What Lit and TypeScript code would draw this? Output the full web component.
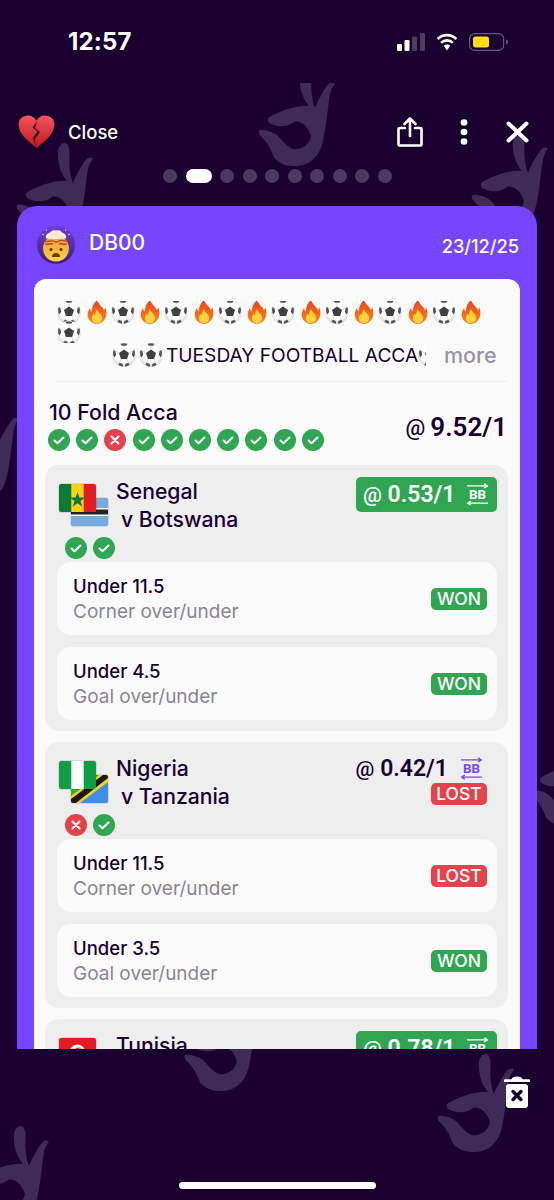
import { LitElement, html, css, svg } from "lit";
import { customElement } from "lit/decorators.js";

const HAND = "M145 0 C133 0 125 15 125 30 C124 60 132 90 152 113 C120 110 70 125 32 148 C26 153 30 165 40 168 C60 175 85 180 110 160 C130 158 150 175 158 203 C155 225 135 243 110 243 C95 243 80 225 60 203 C45 190 20 183 5 185 C-2 190 2 198 10 205 C25 220 35 235 48 268 C70 290 90 293 110 293 C150 293 185 270 195 213 C205 170 208 120 215 78 C220 55 232 50 228 45 C222 40 212 45 205 55 C195 70 180 95 170 118 C160 95 158 60 160 30 C160 12 155 0 145 0 Z";
const HANDS: [number, number][] = [
  [258, -15], [16, 60], [471, 50], [184, 910], [437, 971], [-28, 1043], [-58, 320], [530, 645],
];

const ball = svg`<svg class="ball" viewBox="0 0 24 24"><defs><radialGradient id="bg" cx=".5" cy=".42" r=".62"><stop offset=".6" stop-color="#fff"/><stop offset="1" stop-color="#cfcfcf"/></radialGradient></defs><circle cx="12" cy="12" r="11.900" fill="url(#bg)"/><path d="M12 6.500l5 3.600-1.900 5.900H8.900L7 10.100z" fill="#404040"/><path d="M8.500 .8Q12-.1 15.500 .8L14.300 2.800H9.700zM1.500 7.200L3.300 7.800 4.200 11.800 2.500 14.500Q.2 11.500 1.500 7.200zM22.500 7.200L20.700 7.800 19.800 11.800 21.500 14.500Q23.800 11.500 22.500 7.200zM6.300 21.800L7.800 19.800 10.800 21 11 23.800Q8.300 23.500 6.300 21.800zM17.700 21.800L16.200 19.800 13.200 21 13 23.800Q15.700 23.500 17.700 21.800z" fill="#565656"/><path d="M12 6.500V2.800M7 10.100L3.300 7.800M17 10.100L20.700 7.800M8.900 16L7.800 19.800M15.100 16L16.200 19.800" stroke="#bbb" stroke-width=".5"/></svg>`;
const fire = svg`<svg class="fire" viewBox="0 0 20 24"><defs><linearGradient id="fg" x1="0" y1="0" x2="0" y2="1"><stop offset="0" stop-color="#f0401a"/><stop offset="1" stop-color="#f98a1c"/></linearGradient></defs><path d="M10 0c1 4 5 6 7 10 1-1 1-2 1-3 2 4 2 8 0 12-2 3-5 5-8 5s-7-2-8.500-5.500C0 15 1 11 3 8c0 2 1 3 2 3.500C4.500 7 7 3 10 0z" fill="url(#fg)"/><path d="M10 9c.5 2.800 4 4.500 5 8 .7 3.400-2.300 6.500-5 6.500s-5.500-3-5-6c.2-1.700 1.100-3 2-4 .2 1 .6 1.500 1.200 1.800C7.900 13 9 11 10 9z" fill="#ffd23f"/></svg>`;

const heart = svg`<svg class="heart" viewBox="0 0 37 34"><defs><linearGradient id="hg" x1="0" y1="0" x2="0" y2="1"><stop offset="0" stop-color="#f2555a"/><stop offset="1" stop-color="#c4161c"/></linearGradient></defs><path d="M18.500 33C12 27 1 20 .5 10 .3 4 5 .5 10 .5c4 0 6.500 2 8.500 5 2-3 4.500-5 8.500-5 5 0 9.700 3.500 9.500 9.500-.5 10-11 17-18 23z" fill="url(#hg)"/><path d="M19.500 5.500l-5 7 5 4-4.500 6 3 10.500-1-9 5-7-5-4z" fill="#3a1a22"/></svg>`;

const brain = svg`<svg class="face" viewBox="0 0 38 38"><defs><linearGradient id="ag" x1="0" y1="0" x2="0" y2="1"><stop offset="0" stop-color="#6a3ed0"/><stop offset="1" stop-color="#40207a"/></linearGradient><linearGradient id="yg" x1="0" y1="0" x2="0" y2="1"><stop offset="0" stop-color="#f39a2a"/><stop offset="1" stop-color="#fcd34a"/></linearGradient></defs><circle cx="19" cy="19" r="19" fill="url(#ag)"/><circle cx="19" cy="22.500" r="13" fill="url(#yg)"/><path d="M9 12c-1-3 2-5 4-5.500 2-2.500 4-2.500 6-2 2-.5 4.500-.5 6 2 2 .5 5 2.500 4 5.500-2 1.500-3.500 .5-5 1-2-.5-3.500 .5-5 0-2 .5-3.500-.5-5 0-1.500-.5-3.500 .5-5-1z" fill="#f6ead2"/><path d="M7 15c4 2 6-1 9 0s3 2 6 0 5 1 9 0M8 18c3 1 5-1 8 0M22 18c3-1 5 1 8 0" stroke="#a94a2a" stroke-width="1.300" fill="none"/><circle cx="14" cy="23.500" r="1.500" fill="#4a2c12"/><circle cx="24" cy="23.500" r="1.500" fill="#4a2c12"/><path d="M15 31c0-3 1.800-4 4-4s4 1 4 4z" fill="#6e3413"/><path d="M5 8l2 1M9 3.500l.7 1.500M29 3.500l-.7 1.500M33 8l-2 1" stroke="#e8d6b5" stroke-width="1"/></svg>`;

const share = svg`<svg class="share" viewBox="0 0 26 30" fill="none" stroke="#fff" stroke-width="2.600" stroke-linecap="round" stroke-linejoin="round"><path d="M8 11H2.500a1 1 0 0 0-1 1v15.500a1 1 0 0 0 1 1h21a1 1 0 0 0 1-1V12a1 1 0 0 0-1-1H18"/><path d="M13 19V2M7.500 7L13 1.500 18.500 7"/></svg>`;
const more = svg`<svg class="more" viewBox="0 0 8 26" fill="#fff"><circle cx="4" cy="3.500" r="3.300"/><circle cx="4" cy="13" r="3.300"/><circle cx="4" cy="22.500" r="3.300"/></svg>`;
const closeIcon = svg`<svg class="close" viewBox="0 0 23 22" fill="none" stroke="#fff" stroke-width="4" stroke-linecap="round"><path d="M2.500 2.500l18 17M20.500 2.500l-18 17"/></svg>`;
const trash = svg`<svg class="trash" viewBox="0 0 26 32"><path d="M0 4.500C0 3.800.6 3.300 1.300 3.300H7.500C8 1.500 10 .5 13 .5s5 1 5.500 2.800h6.200c.7 0 1.300.5 1.300 1.200V6H0z" fill="#fff"/><rect x="2" y="8" width="22" height="24" rx="3" fill="#fff"/><path d="M9 15.500l8 8M17 15.500l-8 8" stroke="#190031" stroke-width="3.400" stroke-linecap="round"/></svg>`;
const signal = svg`<svg class="signal" viewBox="0 0 28 18"><rect x="0" y="11" width="5" height="7" rx="1.200" fill="#fff"/><rect x="7.500" y="7" width="5" height="11" rx="1.200" fill="#fff"/><rect x="15" y="3.500" width="5" height="14.500" rx="1.200" fill="#4b3c62"/><rect x="23" y="0" width="5" height="18" rx="1.200" fill="#4b3c62"/></svg>`;
const wifi = svg`<svg class="wifi" viewBox="0 0 24 18" fill="#fff"><path d="M12 3.500c3.300 0 6.300 1.300 8.500 3.400l1.700-1.900A15 15 0 0 0 12 .8 15 15 0 0 0 1.800 5l1.700 1.900A12.300 12.300 0 0 1 12 3.500z"/><path d="M12 8.800c1.900 0 3.700.7 5 2l1.800-1.900A10 10 0 0 0 12 6.100 10 10 0 0 0 5.200 8.900L7 10.800c1.300-1.300 3.100-2 5-2z"/><path d="M12 11.500c-1.300 0-2.400.5-3.200 1.300L12 17.500l3.200-4.700c-.8-.8-1.900-1.300-3.200-1.300z"/></svg>`;
const battery = svg`<svg class="battery" viewBox="0 0 39 18"><rect x=".6" y=".6" width="34" height="16.800" rx="5" fill="none" stroke="#66587c" stroke-width="1.200"/><rect x="4" y="3.500" width="16" height="11" rx="2.500" fill="#fedb18"/><path d="M37 6.500c1.200.4 2 1.300 2 2.500s-.8 2.100-2 2.500z" fill="#66587c"/></svg>`;

const flags: Record<string, unknown> = {
  sn: svg`<rect width="37" height="28" fill="#fcd116"/><rect width="12.300" height="28" fill="#0a7a3c"/><rect x="24.700" width="12.300" height="28" fill="#e31b23"/><path d="M18.500 8l1.900 5.600h5.900l-4.800 3.500 1.800 5.600-4.800-3.400-4.800 3.400 1.800-5.600-4.800-3.500h5.900z" fill="#0a7a3c"/>`,
  bw: svg`<rect width="37" height="28" fill="#75aadb"/><rect y="10" width="37" height="8" fill="#fff"/><rect y="11.500" width="37" height="5" fill="#222"/>`,
  ng: svg`<rect width="37" height="28" fill="#fff"/><rect width="12.300" height="28" fill="#0f9d46"/><rect x="24.700" width="12.300" height="28" fill="#0f9d46"/>`,
  tz: svg`<rect width="37" height="28" fill="#3d8fe8"/><path d="M0 0h37L0 28z" fill="#1eb53a"/><path d="M0 28L37 0v7L9 28z" fill="#fcd116"/><path d="M0 21L28 0h9L0 28z" fill="#fcd116"/><path d="M0 28V24L32 0h5v3L5 28z" fill="#1a1a1a"/>`,
  tn: svg`<rect width="37" height="28" fill="#e31b23"/><circle cx="18.500" cy="14" r="7.500" fill="#fff"/><circle cx="19.500" cy="14" r="4.500" fill="#e31b23"/><circle cx="21" cy="14" r="3.600" fill="#fff"/>`,
};
const flag = (code: string, cls: string) =>
  html`<svg class="flag ${cls}" viewBox="0 0 37 28" preserveAspectRatio="none">${flags[code]}</svg>`;

const bb = (color: string) => svg`<svg class="bb" viewBox="0 0 24 24" style="color:${color}"><path d="M1 3h21M19 .8l3.200 2.200-3.200 2.200M2 21h21M5 18.800l-3.200 2.200 3.200 2.200" fill="none" stroke="currentColor" stroke-width="1.500"/><text x="12" y="17" text-anchor="middle" font-family="Roboto, sans-serif" font-weight="700" font-size="14" fill="currentColor">BB</text></svg>`;

const tick = (ok: boolean) =>
  html`<span class="tick ${ok ? "ok" : "bad"}"
    ><svg viewBox="0 0 22 22" fill="none" stroke="#fff" stroke-width="2" stroke-linecap="round" stroke-linejoin="round">
      ${ok ? svg`<path d="M6.500 11.500l3 2.800 6-5.800"/>` : svg`<path d="M7.500 7.500l7 7M14.500 7.500l-7 7"/>`}
    </svg></span
  >`;

interface Bet { pick: string; market: string; won: boolean }
interface Leg { a: string; b?: string; fa: string; fb?: string; odds: string; won: boolean; ticks: boolean[]; bets: Bet[] }

const LEGS: Leg[] = [
  { a: "Senegal", b: "v Botswana", fa: "sn", fb: "bw", odds: "0.53/1", won: true, ticks: [true, true],
    bets: [{ pick: "Under 11.5", market: "Corner over/under", won: true }, { pick: "Under 4.5", market: "Goal over/under", won: true }] },
  { a: "Nigeria", b: "v Tanzania", fa: "ng", fb: "tz", odds: "0.42/1", won: false, ticks: [false, true],
    bets: [{ pick: "Under 11.5", market: "Corner over/under", won: false }, { pick: "Under 3.5", market: "Goal over/under", won: true }] },
  { a: "Tunisia", fa: "tn", odds: "0.78/1", won: true, ticks: [], bets: [] },
];

const badge = (won: boolean) => html`<span class="badge ${won ? "won" : "lost"}">${won ? "WON" : "LOST"}</span>`;

@customElement("app-root")
export class AppRoot extends LitElement {
  static styles = css`
    :host { display: block; width: 554px; height: 1200px; position: relative; overflow: hidden; background: #190031; font-family: Inter, "Liberation Sans", sans-serif; color: #190031; }
    .pattern { position: absolute; left: 0; right: 0; top: 83px; bottom: 0; overflow: hidden; }
    .hand { position: absolute; width: 77px; height: 98px; fill: #3e2b57; }
    .screen { position: relative; display: flex; flex-direction: column; }
    .status { height: 83px; display: flex; align-items: center; padding: 0 46px 0 68px; color: #fff; box-sizing: border-box; }
    .time { font-size: 24px; font-weight: 700; flex: 1; letter-spacing: .2px; }
    .signal { width: 28px; height: 18px; margin-right: 10px; }
    .wifi { width: 24px; height: 18px; margin-right: 10px; }
    .battery { width: 39px; height: 18px; }
    .top { height: 66px; margin-top: 16px; display: flex; align-items: center; padding: 0 25px 0 18px; color: #fff; }
    .heart { width: 37px; height: 34px; }
    .closeLabel { margin-left: 13px; font-size: 18.500px; font-weight: 500; flex: 1; }
    .share { width: 26px; height: 30px; margin-right: 37px; }
    .more { width: 8px; height: 26px; margin-right: 38px; }
    .close { width: 23px; height: 22px; }
    .dots { display: flex; gap: 8.500px; margin-top: 4px; padding-left: 163px; }
    .dot { width: 14px; height: 14px; border-radius: 50%; background: #4a3a60; }
    .dot.on { width: 26px; border-radius: 7px; background: #fff; }
    .card { margin: 23px 17px 0; height: 843px; overflow: hidden; background: #7545ff; border-radius: 20px 20px 0 0; padding: 0 17px; box-sizing: border-box; }
    .cardHead { height: 73px; display: flex; align-items: center; color: #fff; }
    .face { width: 38px; height: 38px; margin: 4px 14px 0 3px; }
    .user { font-size: 21px; font-weight: 500; flex: 1; }
    .date { font-size: 18.200px; font-weight: 500; margin-top: 6px; margin-right: 1px; }
    .panel { background: #fafafa; border-radius: 12px 12px 0 0; padding: 22px 12px 0 11px; }
    .msg { margin-left: 12px; display: flex; flex-wrap: wrap; width: 440px; height: 42px; overflow: hidden; }
    .slot { width: 26.750px; height: 21px; display: flex; align-items: center; }
    .ball { width: 24px; height: 24px; flex: none; }
    .fire { width: 20px; height: 24px; flex: none; margin-left: 3px; }
    .tickerRow { margin: 0 0 14px 12px; height: 24px; display: flex; align-items: center; }
    .ticker { margin-left: 55px; width: 314px; display: flex; align-items: center; overflow: hidden; flex: none; white-space: nowrap; font-size: 19.150px; gap: 3px; }
    .ticker .ball:last-child { margin-left: -3px; }
    .moreLink { margin-left: 18px; font-size: 21.500px; font-weight: 500; color: #9a93a8; }
    .rule { margin-left: 11px; height: 1px; background: #efefef; }
    .summary { display: flex; align-items: center; justify-content: space-between; padding: 18px 1px 14px 3px; }
    .title { font-size: 21.300px; font-weight: 500; line-height: 25px; margin-left: 1px; }
    .ticks { display: flex; gap: 6.200px; margin-top: 4px; }
    .tick { width: 22px; height: 22px; border-radius: 50%; display: block; }
    .tick svg { display: block; width: 22px; height: 22px; }
    .tick.ok { background: #30a653; }
    .tick.bad { background: #e5434b; }
    .odds { font-family: Roboto, sans-serif; font-weight: 600; display: flex; align-items: center; gap: 5px; font-size: 23px; white-space: nowrap; }
    .odds small { font-size: 21px; font-weight: 500; }
    .total { font-size: 26px; margin-top: 3px; }
    .total small { font-size: 22px; }
    .leg { background: #eee; border-radius: 14px; padding: 12px 11px 11px 12px; margin-bottom: 11px; display: flex; flex-direction: column; gap: 12px; }
    .legHead { height: 73px; display: flex; justify-content: space-between; }
    .teams { display: flex; }
    .flags { position: relative; width: 59px; height: 60px; flex: none; }
    .flag { position: absolute; width: 37px; height: 28px; border-radius: 2px; box-shadow: 0 0 0 .5px rgba(0,0,0,.2); }
    .flag.front { left: 2px; top: 7px; }
    .flag.back { left: 14px; top: 21px; }
    .names { font-size: 21.200px; font-weight: 500; line-height: 28px; }
    .names div + div { padding-left: 5px; }
    .legLeft { display: flex; flex-direction: column; }
    .legLeft .ticks { margin: 0 0 0 8px; }
    .legRight { display: flex; flex-direction: column; align-items: flex-end; }
    .pill { height: 35px; box-sizing: border-box; width: 141px; padding: 0 8px 0 7px; border-radius: 5px; background: #30a653; color: #fff; display: flex; align-items: center; justify-content: space-between; }
    .plain { height: 28px; display: flex; align-items: center; gap: 12px; padding-right: 14px; }
    .bb { width: 23px; height: 23px; flex: none; }
    .legRight .badge { margin: 1px 10px 0 0; }
    .bets { display: flex; flex-direction: column; gap: 12px; }
    .bet { height: 73px; box-sizing: border-box; background: #fafafa; border-radius: 14px; padding: 0 10px 0 16px; display: flex; align-items: center; justify-content: space-between; }
    .pick { font-size: 18.500px; font-weight: 500; line-height: 25px; }
    .market { font-size: 19px; color: #8a8595; line-height: 25px; }
    .badge { font-size: 17.500px; font-weight: 500; color: #fff; border-radius: 5px; height: 22px; line-height: 22px; padding: 0 3px; min-width: 50px; text-align: center; }
    .badge.won { background: #30a653; }
    .badge.lost { background: #e5434b; }
    .foot { display: flex; justify-content: flex-end; padding: 27px 24px 0 0; height: 133px; box-sizing: border-box; }
    .trash { width: 26px; height: 32px; }
    .home { width: 197px; height: 7px; border-radius: 4px; background: #fff; margin-left: 179px; }
  `;

  private leg(l: Leg) {
    return html`<section class="leg">
      <div class="legHead">
        <div class="legLeft">
          <div class="teams">
            <div class="flags">${l.fb ? flag(l.fb, "back") : ""}${flag(l.fa, "front")}</div>
            <div class="names"><div>${l.a}</div>${l.b ? html`<div>${l.b}</div>` : ""}</div>
          </div>
          <div class="ticks">${l.ticks.map(tick)}</div>
        </div>
        <div class="legRight">
          ${l.won
            ? html`<div class="pill odds"><span><small>@</small> ${l.odds}</span>${bb("#fff")}</div>`
            : html`<div class="plain odds"><span><small>@</small> ${l.odds}</span>${bb("#7545ff")}</div>${badge(false)}`}
        </div>
      </div>
      ${l.bets.length
        ? html`<div class="bets">
            ${l.bets.map(
              (b) => html`<div class="bet"><div><div class="pick">${b.pick}</div><div class="market">${b.market}</div></div>${badge(b.won)}</div>`
            )}
          </div>`
        : ""}
    </section>`;
  }

  render() {
    const slots = Array.from({ length: 8 }, () => html`<span class="slot">${ball}</span><span class="slot">${fire}</span>`);
    return html`
      <div class="pattern">
        ${HANDS.map(
          ([x, y]) => html`<svg class="hand" style="left:${x}px;top:${y}px" viewBox="0 0 230 293" preserveAspectRatio="none"><path d=${HAND} /></svg>`
        )}
      </div>
      <div class="screen">
        <div class="status"><span class="time">12:57</span>${signal}${wifi}${battery}</div>
        <div class="top">${heart}<span class="closeLabel">Close</span>${share}${more}${closeIcon}</div>
        <div class="dots">
          <i class="dot"></i><i class="dot on"></i>
          ${Array.from({ length: 8 }, () => html`<i class="dot"></i>`)}
        </div>
        <div class="card">
          <div class="cardHead">${brain}<span class="user">DB00</span><span class="date">23/12/25</span></div>
          <div class="panel">
            <div class="msg">${slots}<span class="slot">${ball}</span></div>
            <div class="tickerRow">
              <div class="ticker">${ball}${ball}<span>TUESDAY FOOTBALL ACCA</span>${ball}</div>
              <span class="moreLink">more</span>
            </div>
            <div class="rule"></div>
            <div class="summary">
              <div>
                <div class="title">10 Fold Acca</div>
                <div class="ticks">${[true, true, false, true, true, true, true, true, true, true].map(tick)}</div>
              </div>
              <div class="odds total"><small>@</small> 9.52/1</div>
            </div>
            ${LEGS.map((l) => this.leg(l))}
          </div>
        </div>
        <div class="foot">${trash}</div>
        <div class="home"></div>
      </div>
    `;
  }
}
